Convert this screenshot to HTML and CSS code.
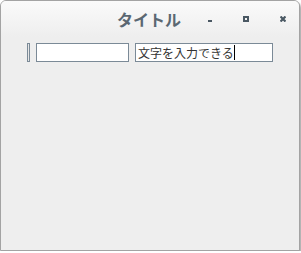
FILE: index.html
```html
<!DOCTYPE html>
<html lang="ja">
<head>
<meta charset="utf-8">
<title>タイトル</title>
<link rel="stylesheet" href="styles.css">
</head>
<body>
<div class="window">
  <div class="titlebar">
    <span class="title">タイトル</span>
    <svg class="btn btn-min" width="4" height="2" viewBox="0 0 4 2"><rect width="4" height="2" fill="#4a5863"/></svg>
    <svg class="btn btn-max" width="6" height="6" viewBox="0 0 6 6"><rect x="1" y="1" width="4" height="4" fill="none" stroke="#4a5863" stroke-width="2"/></svg>
    <svg class="btn btn-close" width="6" height="6" viewBox="0 0 6 6"><path d="M0.5 0.5L5.5 5.5M5.5 0.5L0.5 5.5" stroke="#4a5863" stroke-width="2.2"/></svg>
  </div>
  <div class="content">
    <div class="field field-thin"></div>
    <div class="field field-mid"></div>
    <div class="field field-wide"><span class="text">文字を入力できる</span><span class="caret"></span></div>
  </div>
</div>
</body>
</html>
```
FILE: styles.css
```css
html, body {
  margin: 0;
  padding: 0;
  background: #ffffff;
}
.window {
  box-sizing: border-box;
  width: 300px;
  height: 251px;
  border: 1px solid #a3a3a3;
  border-radius: 6px 6px 0 0;
  background: #eeeeee;
  box-shadow: 1px 2px 2px rgba(0, 0, 0, 0.4);
  font-family: "Noto Sans CJK JP", "Noto Sans", sans-serif;
}
.titlebar {
  height: 36px;
  display: flex;
  align-items: center;
  padding-left: 116px;
  border-radius: 5px 5px 0 0;
  background: linear-gradient(#fafafa, #eeeeee);
}
.title {
  width: 91px;
  font-size: 16px;
  font-weight: bold;
  color: #5a6772;
  line-height: 20px;
}
.btn {
  display: block;
  flex: none;
}
.btn-min {
  margin-top: 4px;
}
.btn-max {
  margin-left: 31px;
}
.btn-close {
  margin-left: 31px;
}
.content {
  display: flex;
  gap: 6px;
  padding: 6px 0 0 26px;
}
.field {
  box-sizing: border-box;
  height: 19px;
  border: 1px solid #7b8a97;
  background: #ffffff;
  display: flex;
  align-items: center;
}
.field-thin {
  width: 3px;
  background: #e6e6e6;
}
.field-mid {
  width: 93px;
}
.field-wide {
  width: 138px;
  padding-left: 2px;
}
.text {
  font-size: 12px;
  line-height: 16px;
  color: #333333;
}
.caret {
  display: block;
  width: 1px;
  height: 15px;
  background: #000000;
}
```
